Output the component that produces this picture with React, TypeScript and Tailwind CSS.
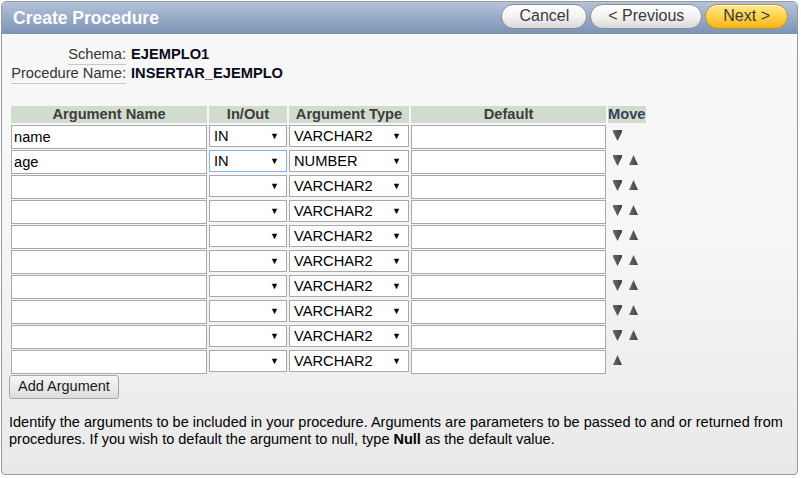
import React from 'react';

interface Row {
  name: string;
  inout: string;
  type: string;
  focused?: boolean;
}

const rows: Row[] = [
  { name: 'name', inout: 'IN', type: 'VARCHAR2' },
  { name: 'age', inout: 'IN', type: 'NUMBER', focused: true },
  ...Array.from({ length: 8 }, () => ({ name: '', inout: '', type: 'VARCHAR2' })),
];

const Arrow = ({ up }: { up?: boolean }) => (
  <svg width="9" height="11" viewBox="0 0 9 11" className="block">
    <defs>
      <linearGradient id={up ? 'gu' : 'gd'} x1="0" x2="1" y1="0" y2="0">
        <stop offset="0" stopColor="#6b6b6b" />
        <stop offset="1" stopColor="#3f3f3f" />
      </linearGradient>
    </defs>
    {up ? (
      <path d="M4.5 0 L9 10 L0 10 Z" fill="url(#gu)" />
    ) : (
      <path d="M0 0 H9 V2 L4.5 11 L0 2 Z" fill="url(#gd)" />
    )}
  </svg>
);

const Select = ({ value, width, focused }: { value: string; width: string; focused?: boolean }) => (
  <div
    className={`${width} h-[22px] flex items-center justify-between pl-[4px] pr-[7px] bg-white border text-[14.67px] text-black ${
      focused ? 'border-[#7eb4ea]' : 'border-[#a9a9a9]'
    }`}
  >
    <span>{value}</span>
    <span className="text-[9px] leading-none">▼</span>
  </div>
);

const PillButton = ({ label, primary }: { label: string; primary?: boolean }) => (
  <button
    className={`h-[25px] px-[17px] rounded-full border text-[16px] leading-none text-[#3a3a3a] shadow-[inset_0_1px_0_rgba(255,255,255,0.8)] ${
      primary
        ? 'border-[#b89234] bg-gradient-to-b from-[#ffe88a] via-[#ffd24a] to-[#f5b30f]'
        : 'border-[#8e8e8e] bg-gradient-to-b from-[#ffffff] via-[#f3f3f3] to-[#d8d8d8]'
    }`}
  >
    {label}
  </button>
);

export default function App() {
  return (
    <div className="w-[801px] h-[478px] bg-white pl-[1px] pt-[1px]" style={{ fontFamily: '"Liberation Sans", Arial, sans-serif' }}>
      <div className="w-[797px] h-[474px] border border-[#9a9a9a] rounded-t-[5px] rounded-b-[4px] overflow-hidden flex flex-col bg-gradient-to-b from-[#f8f8f8] via-[#f6f6f6] to-[#e9e9e9]">
        {/* header */}
        <div className="h-[32px] shrink-0 flex items-center justify-between pl-[11px] pr-[9px] bg-gradient-to-b from-[#b4c3db] to-[#7c92b5]">
          <h1 className="text-[17.5px] font-bold text-white">Create Procedure</h1>
          <div className="flex items-center gap-[3px] -mt-[4px]">
            <PillButton label="Cancel" />
            <PillButton label="< Previous" />
            <PillButton label="Next >" primary />
          </div>
        </div>

        {/* body */}
        <div className="flex-1 pl-[7px] pt-[12px]">
          <div className="flex flex-col text-[14.67px] leading-[17px]">
            <div className="flex items-end">
              <div className="w-[117px] flex justify-end">
                <span className="text-[#333] border-b border-[#c8c8c8] pb-[1px]">Schema:</span>
              </div>
              <span className="ml-[5px] font-bold text-[#0a0a1a] pb-[2px]">EJEMPLO1</span>
            </div>
            <div className="flex items-end">
              <div className="w-[117px] flex justify-end">
                <span className="text-[#333] border-b border-[#c8c8c8] pb-[1px]">Procedure Name:</span>
              </div>
              <span className="ml-[5px] font-bold text-[#0a0a1a] pb-[2px]">INSERTAR_EJEMPLO</span>
            </div>
          </div>

          {/* table */}
          <div className="mt-[22px] ml-[2px] grid grid-cols-[196px_78px_120px_195px_38px] gap-x-[2px] gap-y-[1px]">
            {['Argument Name', 'In/Out', 'Argument Type', 'Default', 'Move'].map((h, i) => (
              <div
                key={h}
                className={`h-[17px] mb-[1px] bg-[#d1dccf] text-[14.67px] font-bold leading-[17px] ${
                  i === 4 ? 'text-[#39405a] text-left' : 'text-[#3d3d3d] text-center'
                }`}
              >
                {h}
              </div>
            ))}
            {rows.map((r, i) => (
              <React.Fragment key={i}>
                <div className="h-[24px] bg-white border border-[#a9a9a9] pl-[2px] text-[14.67px] leading-[22px] text-black">
                  {r.name}
                </div>
                <Select value={r.inout} width="w-[78px]" focused={r.focused} />
                <Select value={r.type} width="w-[120px]" />
                <div className="h-[24px] bg-white border border-[#a9a9a9]" />
                <div className="flex items-center gap-[7px] pl-[5px] h-[20px]">
                  {i < rows.length - 1 && <Arrow />}
                  {i > 0 && <Arrow up />}
                </div>
              </React.Fragment>
            ))}
          </div>

          <button className="mt-[1px] h-[24px] px-[8px] rounded-[3px] border border-[#a8a8a8] bg-gradient-to-b from-[#f6f6f6] to-[#dddddd] text-[14.5px] text-[#1a1a1a]">
            Add Argument
          </button>

          <p className="mt-[15px] text-[14.5px] leading-[17px] text-black w-[785px]">
            Identify the arguments to be included in your procedure. Arguments are parameters to be passed to and or returned from
            procedures. If you wish to default the argument to null, type <b>Null</b> as the default value.
          </p>
        </div>
      </div>
    </div>
  );
}
